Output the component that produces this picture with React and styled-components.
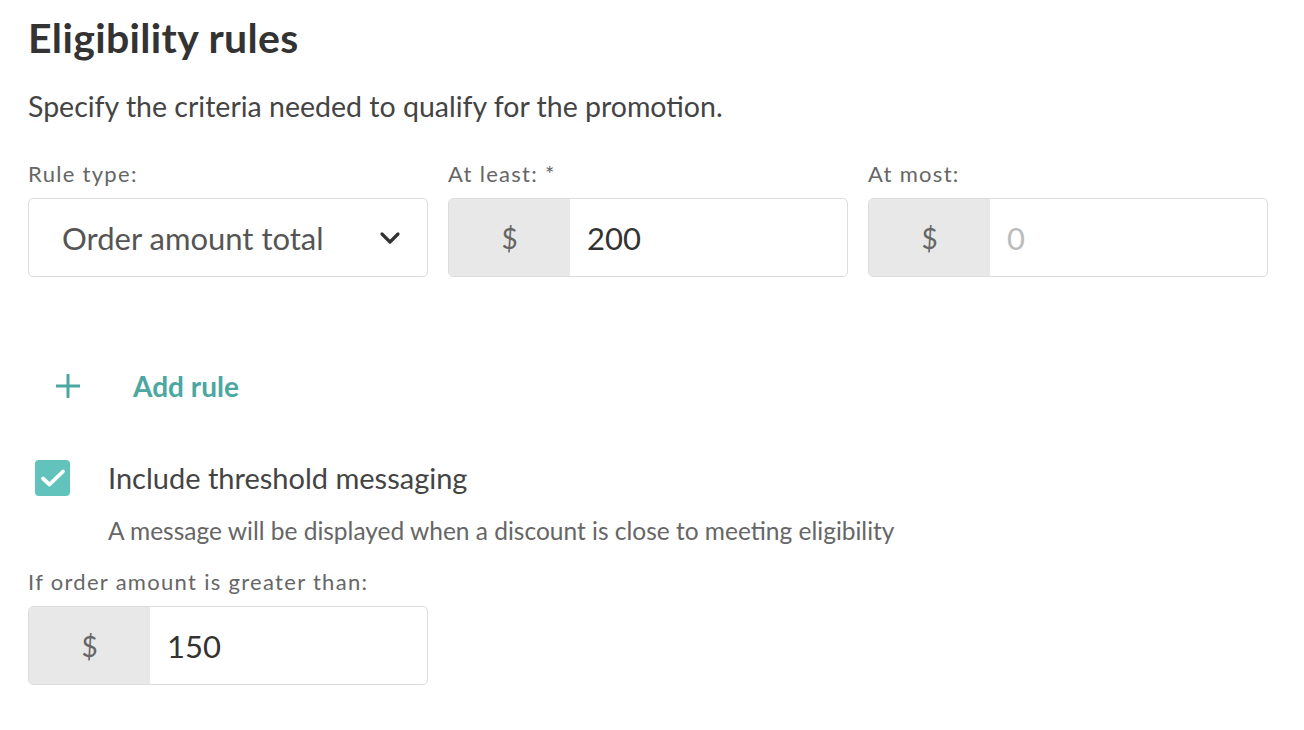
import React from "react";
import styled, { createGlobalStyle } from "styled-components";

const GlobalStyle = createGlobalStyle`
  body {
    margin: 0;
    background: #fff;
    font-family: Lato, "Open Sans", sans-serif;
    color: #333;
  }
`;

const Page = styled.div`
  padding: 14px 0 0 28px;
  width: 1240px;
`;

const Title = styled.h1`
  margin: 0;
  font-size: 41px;
  line-height: 48px;
  letter-spacing: 0.35px;
  font-weight: 700;
  color: #333;
`;

const Intro = styled.p`
  margin: 27px 0 0;
  font-size: 28.5px;
  line-height: 34px;
  color: #444;
`;

const FieldRow = styled.div`
  display: grid;
  grid-template-columns: repeat(3, 400px);
  column-gap: 20px;
  margin-top: 38px;
`;

const Field = styled.div`
  display: flex;
  flex-direction: column;
`;

const Label = styled.label`
  font-size: 22px;
  line-height: 26px;
  letter-spacing: 1.3px;
  color: #666;
  margin-bottom: 11px;
`;

const Box = styled.div`
  display: flex;
  align-items: stretch;
  height: 79px;
  box-sizing: border-box;
  border: 1px solid #dcdcdc;
  border-radius: 5px;
  overflow: hidden;
  background: #fff;
`;

const SelectBox = styled(Box)`
  align-items: center;
  justify-content: space-between;
  padding: 0 26px 0 33px;
  font-size: 31px;
  color: #555;
`;

const Prefix = styled.div`
  width: 121px;
  background: #e8e8e8;
  display: flex;
  align-items: center;
  justify-content: center;
  font-size: 28px;
  color: #666;
`;

const Value = styled.div`
  display: flex;
  align-items: center;
  padding-left: 17px;
  font-size: 31px;
  color: ${(p) => (p.$placeholder ? "#bbb" : "#333")};
`;

const AddRule = styled.button`
  display: flex;
  align-items: center;
  gap: 51px;
  height: 34px;
  margin: 92px 0 0 26px;
  padding: 0;
  border: none;
  background: none;
  font-family: inherit;
  font-size: 28px;
  font-weight: 700;
  color: #4ca7a1;
  cursor: pointer;
`;

const CheckRow = styled.div`
  display: flex;
  align-items: center;
  gap: 38px;
  margin: 57px 0 0 7px;
`;

const CheckBox = styled.span`
  width: 35px;
  height: 36px;
  border-radius: 4px;
  background: #62c3bc;
  display: flex;
  align-items: center;
  justify-content: center;
`;

const CheckLabel = styled.span`
  font-size: 29px;
  line-height: 36px;
  color: #444;
`;

const Help = styled.p`
  margin: 20px 0 0 80px;
  font-size: 24.5px;
  line-height: 30px;
  color: #666;
`;

const Threshold = styled(Field)`
  width: 400px;
  margin-top: 23px;
`;

const MoneyInput = ({ value, placeholder }) => (
  <Box>
    <Prefix>$</Prefix>
    <Value $placeholder={!value}>{value || placeholder}</Value>
  </Box>
);

export default function App() {
  return (
    <Page>
      <GlobalStyle />
      <Title>Eligibility rules</Title>
      <Intro>Specify the criteria needed to qualify for the promotion.</Intro>

      <FieldRow>
        <Field>
          <Label>Rule type:</Label>
          <SelectBox>
            Order amount total
            <svg width="22" height="14" viewBox="0 0 22 14">
              <path d="M3 3l8 8 8-8" fill="none" stroke="#333" strokeWidth="3.2" strokeLinecap="round" strokeLinejoin="round" />
            </svg>
          </SelectBox>
        </Field>
        <Field>
          <Label>At least: *</Label>
          <MoneyInput value="200" />
        </Field>
        <Field>
          <Label>At most:</Label>
          <MoneyInput placeholder="0" />
        </Field>
      </FieldRow>

      <AddRule>
        <svg width="28" height="28" viewBox="0 0 28 28">
          <path d="M14 2v24M2 14h24" stroke="#4ca7a1" strokeWidth="3" />
        </svg>
        Add rule
      </AddRule>

      <CheckRow>
        <CheckBox>
          <svg width="26" height="20" viewBox="0 0 26 20">
            <path d="M3 10.5l6.5 6L23 3.5" fill="none" stroke="#fff" strokeWidth="3.8" strokeLinecap="round" strokeLinejoin="round" />
          </svg>
        </CheckBox>
        <CheckLabel>Include threshold messaging</CheckLabel>
      </CheckRow>
      <Help>A message will be displayed when a discount is close to meeting eligibility</Help>

      <Threshold>
        <Label>If order amount is greater than:</Label>
        <MoneyInput value="150" />
      </Threshold>
    </Page>
  );
}
